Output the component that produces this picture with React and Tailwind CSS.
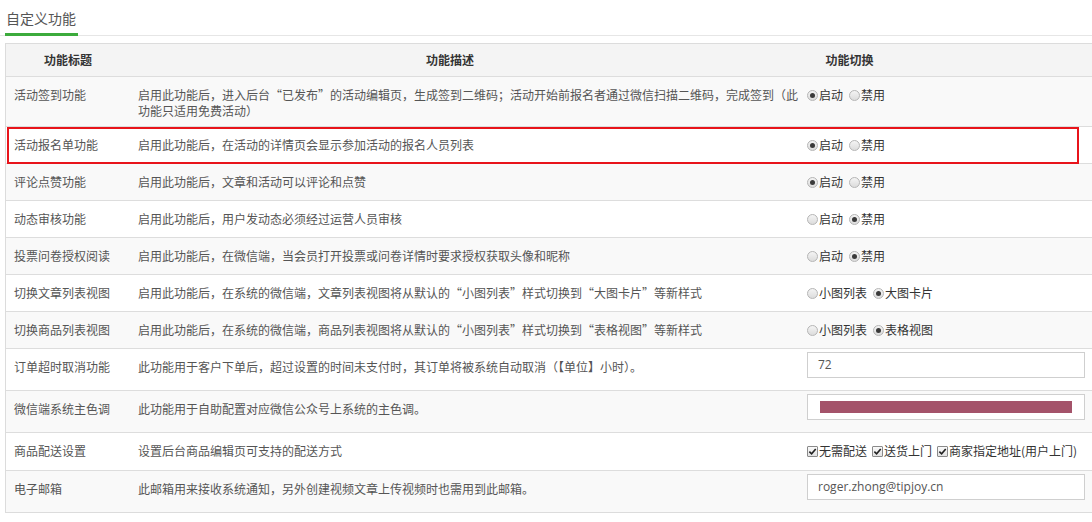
import React from "react";

const cjk = "font-['Noto_Sans_CJK_SC','Noto_Sans',sans-serif]";

function Radio({ checked, label }) {
  return (
    <span className="inline-flex items-center mr-[6px]">
      <span className="w-[11px] h-[11px] rounded-full border border-[#b5b5b5] bg-gradient-to-b from-[#f4f4f4] to-[#dcdcdc] flex items-center justify-center mr-[1px]">
        {checked && <span className="w-[5px] h-[5px] rounded-full bg-[#3a3a3a]" />}
      </span>
      <span>{label}</span>
    </span>
  );
}

function Check({ label }) {
  return (
    <span className="inline-flex items-center mr-[5px]">
      <span className="w-[11px] h-[11px] border border-[#8a8a8a] rounded-[1px] bg-gradient-to-b from-[#fafafa] to-[#e2e2e2] flex items-center justify-center mr-[1px]">
        <svg viewBox="0 0 10 10" className="w-[9px] h-[9px]">
          <path d="M1.5 5.2 L4 7.6 L8.6 2.2" fill="none" stroke="#222" strokeWidth="1.8" />
        </svg>
      </span>
      <span>{label}</span>
    </span>
  );
}

function Input({ children }) {
  return (
    <div className="w-[278px] h-[26px] border border-[#cfcfcf] bg-white flex items-center px-[10px] text-[12px] text-[#555] font-['Open_Sans','Noto_Sans_CJK_SC',sans-serif]">
      {children}
    </div>
  );
}

const rows = [
  {
    t: "活动签到功能",
    d: (
      <>
        启用此功能后，进入后台“已发布”的活动编辑页，生成签到二维码；活动开始前报名者通过微信扫描二维码，完成签到（此
        <br />
        功能只适用免费活动）
      </>
    ),
    h: "h-[50px]",
    c: (
      <>
        <Radio checked label="启动" />
        <Radio label="禁用" />
      </>
    ),
  },
  { t: "活动报名单功能", d: "启用此功能后，在活动的详情页会显示参加活动的报名人员列表", h: "h-[37px]", c: (<><Radio checked label="启动" /><Radio label="禁用" /></>) },
  { t: "评论点赞功能", d: "启用此功能后，文章和活动可以评论和点赞", h: "h-[37px]", c: (<><Radio checked label="启动" /><Radio label="禁用" /></>) },
  { t: "动态审核功能", d: "启用此功能后，用户发动态必须经过运营人员审核", h: "h-[37px]", c: (<><Radio label="启动" /><Radio checked label="禁用" /></>) },
  { t: "投票问卷授权阅读", d: "启用此功能后，在微信端，当会员打开投票或问卷详情时要求授权获取头像和昵称", h: "h-[37px]", c: (<><Radio label="启动" /><Radio checked label="禁用" /></>) },
  { t: "切换文章列表视图", d: "启用此功能后，在系统的微信端，文章列表视图将从默认的“小图列表”样式切换到“大图卡片”等新样式", h: "h-[37px]", c: (<><Radio label="小图列表" /><Radio checked label="大图卡片" /></>) },
  { t: "切换商品列表视图", d: "启用此功能后，在系统的微信端，商品列表视图将从默认的“小图列表”样式切换到“表格视图”等新样式", h: "h-[37px]", c: (<><Radio label="小图列表" /><Radio checked label="表格视图" /></>) },
  { t: "订单超时取消功能", d: "此功能用于客户下单后，超过设置的时间未支付时，其订单将被系统自动取消（【单位】小时）。", h: "h-[42px]", input: true, c: <Input>72</Input> },
  {
    t: "微信端系统主色调",
    d: "此功能用于自助配置对应微信公众号上系统的主色调。",
    h: "h-[42px]",
    input: true,
    c: (
      <Input>
        <div className="w-full h-[12px] bg-[#a4536a] ml-[2px] mr-[2px]" />
      </Input>
    ),
  },
  { t: "商品配送设置", d: "设置后台商品编辑页可支持的配送方式", h: "h-[38px]", c: (<><Check label="无需配送" /><Check label="送货上门" /><Check label="商家指定地址(用户上门)" /></>) },
  { t: "电子邮箱", d: "此邮箱用来接收系统通知，另外创建视频文章上传视频时也需用到此邮箱。", h: "h-[42px]", input: true, c: <Input>roger.zhong@tipjoy.cn</Input> },
];

export default function App() {
  return (
    <div className={`w-[1092px] h-[522px] overflow-hidden bg-white ${cjk}`}>
      <div className="h-[36px] border-b border-[#e6e6e6] flex items-end pl-[5px]">
        <div className="w-[73px] h-[36px] border-b-[3px] border-[#3cab3c] mb-[-1px] flex items-start pt-[8px] pl-[1px] text-[14px] text-[#555] leading-[20px]">
          自定义功能
        </div>
      </div>
      <div className="relative ml-[5px] mt-[7px] w-[1095px] border border-[#dcdcdc] text-[12px] leading-[16px] text-[#555]">
        <div className="grid grid-cols-[124px_640px_1fr] h-[32px] bg-[#f4f4f4] items-center font-bold text-[#333]">
          <div className="text-center">功能标题</div>
          <div className="text-center">功能描述</div>
          <div className="text-center pr-[170px]">功能切换</div>
        </div>
        {rows.map((r, i) => (
          <div
            key={i}
            className={`grid grid-cols-[124px_670px_1fr] border-t border-[#dddddd] ${r.h} ${i % 2 === 0 ? "bg-[#f9f9f9]" : "bg-white"}`}
          >
            <div className="pl-[8px] pt-[10px]">{r.t}</div>
            <div className="pl-[8px] pt-[10px] whitespace-nowrap">{r.d}</div>
            <div className={`pl-[7px] ${r.input ? "pt-[8px]" : "pt-[10px]"} flex items-start text-[#333]`}>
              <div className="flex items-center h-[16px]">{r.c}</div>
            </div>
          </div>
        ))}
        <div className="absolute left-[1px] top-[83px] w-[1072px] h-[37px] border-2 border-[#e8141b] pointer-events-none" />
      </div>
    </div>
  );
}
